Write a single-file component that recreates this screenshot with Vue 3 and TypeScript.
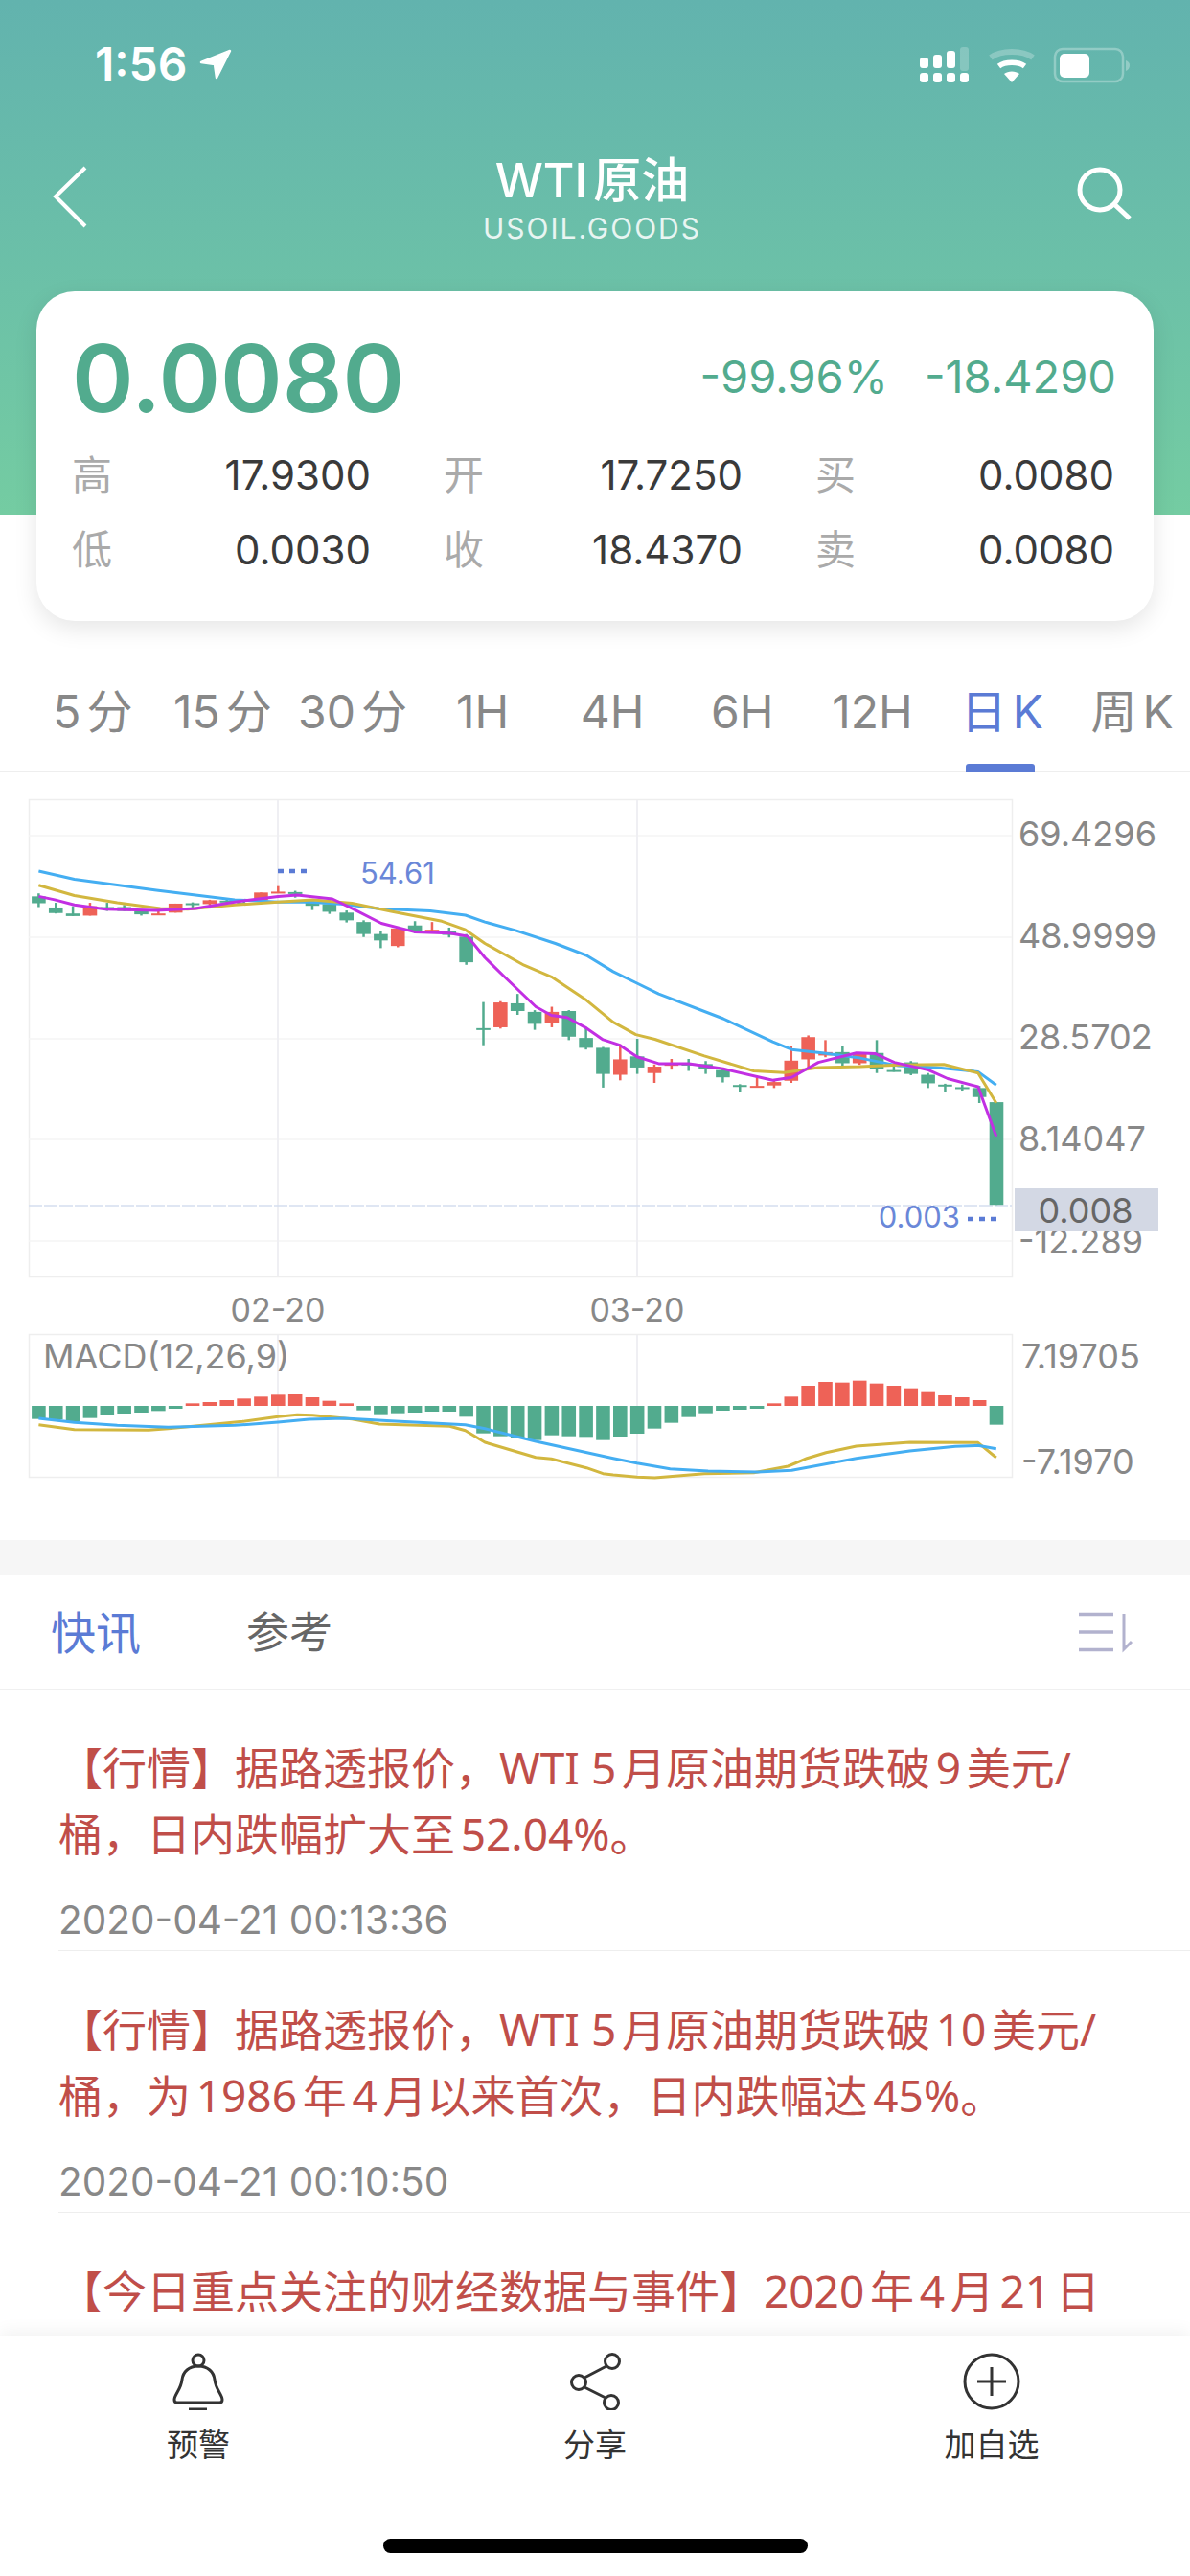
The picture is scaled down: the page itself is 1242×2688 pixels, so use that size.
<script setup lang="ts">
type Candle = [number, number, number, number, 0 | 1] // body top, body bottom, wick top, wick bottom, red?

const periods = ['5分', '15分', '30分', '1H', '4H', '6H', '12H', '日K', '周K']
const stats = [
  [['高', '17.9300'], ['低', '0.0030']],
  [['开', '17.7250'], ['收', '18.4370']],
  [['买', '0.0080'], ['卖', '0.0080']],
]
const news = [
  { lines: ['【行情】据路透报价，WTI 5月原油期货跌破9美元/', '桶，日内跌幅扩大至52.04%。'], time: '2020-04-21 00:13:36' },
  { lines: ['【行情】据路透报价，WTI 5月原油期货跌破10美元/', '桶，为1986年4月以来首次，日内跌幅达45%。'], time: '2020-04-21 00:10:50' },
  { lines: ['【今日重点关注的财经数据与事件】2020年4月21日'], time: '' },
]

// chart values below are in sampled px, converted to page coords by these
const kx = (i: number) => 40.4 + i * 17.85
const ky = (v: number) => 680 + v / 2.24
const my = (v: number) => 1370 + v / 3
const barW = 14.6

const candleData: Candle[] = [
  [572, 588, 565, 597, 0], [598, 611, 587, 612, 0], [612, 618, 595, 618, 0], [595, 617, 587, 617, 1],
  [597, 600, 587, 606, 0], [597, 606, 592, 606, 0], [607, 614, 605, 617, 0], [612, 614, 605, 615, 1],
  [589, 610, 589, 610, 1], [588, 590, 586, 600, 0], [581, 590, 580, 592, 1], [582, 584, 578, 590, 0],
  [587, 589, 580, 592, 0], [563, 581, 563, 581, 1], [561, 563, 548, 564, 1], [562, 565, 559, 575, 0],
  [586, 594, 580, 604, 0], [590, 608, 588, 613, 0], [610, 628, 605, 633, 0], [632, 660, 628, 667, 0],
  [660, 675, 652, 693, 0], [647, 688, 645, 691, 1], [640, 652, 630, 658, 0], [650, 654, 632, 655, 1],
  [652, 662, 645, 668, 0], [666, 726, 660, 732, 0], [880, 882, 819, 920, 0], [820, 878, 817, 881, 1],
  [822, 840, 800, 849, 0], [842, 870, 838, 884, 0], [842, 868, 830, 878, 1], [840, 900, 838, 908, 0],
  [903, 926, 878, 930, 0], [926, 987, 924, 1019, 0], [953, 989, 918, 1002, 1], [946, 972, 905, 987, 0],
  [970, 985, 965, 1008, 1], [962, 968, 952, 977, 1], [963, 965, 952, 980, 0], [964, 975, 957, 987, 0],
  [978, 995, 975, 1007, 0], [1013, 1015, 1011, 1029, 0], [1015, 1017, 995, 1017, 1], [1006, 1014, 1003, 1020, 1],
  [956, 1003, 922, 1008, 1], [901, 953, 897, 972, 1], [936, 944, 908, 948, 1], [936, 962, 922, 970, 0],
  [940, 962, 936, 966, 1], [938, 975, 908, 985, 0], [978, 981, 968, 982, 0], [960, 987, 957, 990, 0],
  [989, 1009, 985, 1020, 0], [1012, 1016, 1010, 1030, 0], [1018, 1022, 1012, 1026, 0], [1020, 1041, 1015, 1055, 0],
  [1053, 1293, 1053, 1293, 0],
]
const candles = candleData.map((c, i) => ({
  x: kx(i),
  top: ky(c[0]),
  h: Math.max((c[1] - c[0]) / 2.24, 2),
  wickTop: ky(c[2]),
  wickBottom: ky(c[3]),
  color: c[4] ? '#ee6257' : '#52ab8e',
}))

// macd histogram, 291 is the zero line
const macdData = [
  332, 333, 340, 329, 321, 315, 312, 307, 300, 283, 279, 273, 268, 262, 256, 255, 264, 275, 283,
  305, 317, 314, 312, 309, 309, 325, 377, 386, 392, 398, 383, 386, 388, 398, 387, 378, 362, 344, 326,
  314, 306, 303, 300, 283, 262, 228, 216, 218, 212, 221, 228, 236, 248, 258, 264, 273, 350,
]
const macdBars = macdData.map((v, i) => ({
  x: kx(i) - barW / 2,
  y: my(Math.min(v, 291)),
  h: Math.abs(v - 291) / 3,
  color: v < 291 ? '#ee6257' : '#52ab8e',
}))

function line(left: number[][], right: number[][], toY: (v: number) => number) {
  const a = left.map(([x, y]) => `${(x / 2.45).toFixed(1)},${toY(y).toFixed(1)}`)
  const b = right.map(([x, y]) => `${(620 + x / 2.52).toFixed(1)},${toY(y).toFixed(1)}`)
  return [...a, ...b].join(' ')
}

const maLines = [
  {
    color: '#44aef2',
    points: line(
      [[99, 513], [190, 532], [400, 558], [600, 580], [711, 585], [790, 585], [880, 590], [970, 601], [1100, 606], [1190, 616], [1240, 632], [1320, 652], [1420, 682], [1500, 710], [1568, 748]],
      [[113, 775], [170, 800], [340, 858], [470, 912], [520, 930], [600, 938], [700, 950], [800, 968], [900, 972], [1010, 982], [1058, 1013]],
      ky,
    ),
  },
  {
    color: '#d2b73f',
    points: line(
      [[99, 546], [190, 570], [300, 587], [410, 600], [480, 602], [600, 592], [711, 585], [800, 580], [900, 588], [1000, 607], [1130, 630], [1190, 650], [1240, 682], [1340, 733], [1410, 760], [1500, 815], [1568, 866]],
      [[110, 895], [160, 906], [290, 945], [420, 980], [500, 984], [590, 972], [700, 970], [800, 966], [920, 965], [1010, 985], [1058, 1055]],
      ky,
    ),
  },
  {
    color: '#c22fe3',
    points: line(
      [[99, 572], [140, 580], [190, 592], [270, 602], [400, 605], [500, 600], [600, 585], [711, 572], [760, 569], [850, 578], [900, 600], [975, 635], [1060, 655], [1150, 658], [1195, 665], [1240, 715], [1290, 760], [1370, 830], [1410, 850], [1450, 855], [1500, 880], [1542, 907]],
      [[68, 920], [113, 947], [170, 963], [250, 963], [340, 975], [470, 1002], [520, 995], [590, 960], [690, 938], [740, 940], [790, 960], [880, 978], [930, 998], [1010, 1017], [1058, 1133]],
      ky,
    ),
  },
]
const macdLines = [
  {
    color: '#d2b73f',
    points: line(
      [[99, 350], [190, 365], [380, 367], [430, 362], [620, 340], [711, 325], [760, 319], [800, 320], [900, 332], [970, 348], [1150, 355], [1190, 368], [1240, 405], [1370, 452], [1410, 457], [1500, 485], [1542, 503], [1568, 507]],
      [[113, 514], [160, 516], [290, 503], [420, 500], [510, 480], [560, 455], [610, 437], [690, 417], [830, 405], [1010, 406], [1058, 453]],
      my,
    ),
  },
  {
    color: '#44aef2',
    points: line(
      [[99, 330], [190, 343], [300, 352], [430, 358], [600, 352], [711, 342], [790, 333], [880, 330], [1000, 338], [1190, 350], [1240, 362], [1370, 402], [1568, 455]],
      [[113, 470], [200, 488], [300, 495], [430, 498], [520, 493], [690, 455], [830, 432], [950, 418], [1010, 415], [1058, 425]],
      my,
    ),
  },
]

const gridY = [872, 978, 1084, 1189, 1295]
const axisLabels = [
  { y: 870, text: '69.4296' },
  { y: 976, text: '48.9999' },
  { y: 1082, text: '28.5702' },
  { y: 1188, text: '8.14047' },
  { y: 1295, text: '-12.289' },
]
</script>

<template>
  <div class="page">
    <div class="top">
      <div class="status">
        <div class="clock">
          <span>1:56</span>
          <svg width="34" height="32" viewBox="0 0 34 32">
            <path d="M32 2 L2 14 L16 16 L18 30 Z" fill="#fff" stroke="#fff" stroke-width="2.500" stroke-linejoin="round" />
          </svg>
        </div>
        <svg class="status-icons" width="221" height="40" viewBox="0 0 221 40">
          <g fill="#fff">
            <rect x="1" y="12" width="9" height="11" rx="3" />
            <rect x="15" y="9" width="9" height="14" rx="3" />
            <rect x="29" y="5" width="9" height="18" rx="3" />
            <rect x="43" y="1" width="9" height="25" rx="3" opacity=".22" />
            <rect x="1" y="28" width="9" height="10" rx="3" />
            <rect x="15" y="28" width="9" height="10" rx="3" />
            <rect x="29" y="28" width="9" height="10" rx="3" />
            <rect x="43" y="28" width="9" height="10" rx="3" />
          </g>
          <g fill="none" stroke="#fff">
            <path d="M75 12 C86 4 108 4 119 12" stroke-width="6" opacity=".25" />
            <path d="M83.500 21 C90 16 104 16 110.500 21" stroke-width="5.500" />
          </g>
          <path d="M89 29 C93 25.500 101 25.500 105 29 L97 38 Z" fill="#fff" />
          <rect x="142" y="3" width="71" height="34" rx="8" fill="none" stroke="#fff" stroke-width="2.500" opacity=".3" />
          <rect x="147" y="8" width="31" height="25" rx="5" fill="#fff" />
          <path d="M216 15 C219 16 220 18 220 20 C220 22 219 25 216 26 Z" fill="#fff" opacity=".3" />
        </svg>
      </div>

      <div class="nav">
        <svg class="back" width="40" height="70" viewBox="0 0 40 70">
          <path d="M35 5 L4 35 L35 66" fill="none" stroke="#fff" stroke-width="4" />
        </svg>
        <div class="nav-title">
          <div class="title">WTI原油</div>
          <div class="subtitle">USOIL.GOODS</div>
        </div>
        <svg class="search" width="60" height="60" viewBox="0 0 60 60">
          <circle cx="26" cy="26" r="21" fill="none" stroke="#fff" stroke-width="5" />
          <path d="M42 42 L57 56" fill="none" stroke="#fff" stroke-width="5" />
        </svg>
      </div>

      <div class="card">
        <div class="quote">
          <div class="price">0.0080</div>
          <div class="change">
            <span>-99.96%</span>
            <span>-18.4290</span>
          </div>
        </div>
        <div class="stats">
          <div v-for="(col, i) in stats" :key="i" class="stat-col">
            <div v-for="row in col" :key="row[0]" class="stat">
              <span class="stat-label">{{ row[0] }}</span>
              <span class="stat-value">{{ row[1] }}</span>
            </div>
          </div>
        </div>
      </div>
    </div>

    <div class="periods">
      <div v-for="p in periods" :key="p" class="period" :class="{ active: p === '日K' }">{{ p }}</div>
    </div>

    <svg class="chart" width="1242" height="801" viewBox="0 806 1242 801">
      <rect x="30.500" y="834.500" width="1026" height="498" fill="none" stroke="#eeeeee" stroke-width="1.500" />
      <path v-for="y in gridY" :key="y" :d="`M30 ${y}H1056`" stroke="#f4f4f4" stroke-width="1.500" />
      <path d="M290 835V1332M665 835V1332" stroke="#efeff3" stroke-width="2" />
      <path d="M30 1258H1056" stroke="#d5deef" stroke-width="1.500" stroke-dasharray="14 2" />

      <g v-for="c in candles" :key="c.x">
        <path :d="`M${c.x} ${c.wickTop}V${c.wickBottom}`" :stroke="c.color" stroke-width="2.500" />
        <rect :x="c.x - barW / 2" :y="c.top" :width="barW" :height="c.h" :fill="c.color" />
      </g>
      <polyline
        v-for="l in maLines"
        :key="l.color"
        :points="l.points"
        fill="none"
        :stroke="l.color"
        stroke-width="3"
        stroke-linejoin="round"
      />

      <path d="M290 909H320" stroke="#5b7bd5" stroke-width="4.500" stroke-dasharray="6 6" />
      <text x="376" y="922" class="mark">54.61</text>
      <path d="M1010 1272H1040" stroke="#5b7bd5" stroke-width="4.500" stroke-dasharray="6 6" />
      <text x="1002" y="1281" class="mark" text-anchor="end">0.003</text>

      <text v-for="a in axisLabels" :key="a.text" x="1063" :y="a.y + 13" class="axis">{{ a.text }}</text>
      <rect x="1059" y="1240" width="150" height="45" fill="#d3d8e4" />
      <text x="1133" y="1276" class="axis dark" text-anchor="middle">0.008</text>

      <text x="290" y="1379" class="axis date" text-anchor="middle">02-20</text>
      <text x="665" y="1379" class="axis date" text-anchor="middle">03-20</text>

      <rect x="30.500" y="1392.500" width="1026" height="149" fill="none" stroke="#eeeeee" stroke-width="1.500" />
      <path d="M290 1393V1541M665 1393V1541" stroke="#efeff3" stroke-width="2" />
      <rect v-for="b in macdBars" :key="b.x" :x="b.x" :y="b.y" :width="barW" :height="b.h" :fill="b.color" />
      <polyline
        v-for="l in macdLines"
        :key="l.color"
        :points="l.points"
        fill="none"
        :stroke="l.color"
        stroke-width="3"
        stroke-linejoin="round"
      />
      <text x="45" y="1428" class="axis">MACD(12,26,9)</text>
      <text x="1066" y="1428" class="axis">7.19705</text>
      <text x="1066" y="1538" class="axis">-7.1970</text>
    </svg>

    <div class="band"></div>

    <div class="news-tabs">
      <span class="news-tab active">快讯</span>
      <span class="news-tab">参考</span>
      <svg class="sort" width="60" height="44" viewBox="0 0 60 44">
        <path d="M0 3.500H36M0 22H36M0 40.500H36" stroke="#b2b2ce" stroke-width="3.500" />
        <path d="M47 3V40L55 32" fill="none" stroke="#b2b2ce" stroke-width="3" />
      </svg>
    </div>

    <div class="news">
      <div v-for="n in news" :key="n.lines[0]" class="news-item">
        <div class="news-text">
          <div v-for="l in n.lines" :key="l">{{ l }}</div>
        </div>
        <div v-if="n.time" class="news-time">{{ n.time }}</div>
      </div>
    </div>

    <div class="bottom">
      <div class="actions">
        <div class="action">
          <svg width="60" height="60" viewBox="0 0 60 60" fill="none" stroke="#333" stroke-width="3">
            <circle cx="30" cy="8" r="6" />
            <path d="M30 14 C20 14 14 20 13 28 C12 38 5 44 5 49 C5 51 6 52 8 52 H52 C54 52 55 51 55 49 C55 44 48 38 47 28 C46 20 40 14 30 14 Z" />
            <path d="M20 59 H39" />
          </svg>
          <span>预警</span>
        </div>
        <div class="action">
          <svg width="60" height="60" viewBox="0 0 60 60" fill="none" stroke="#333" stroke-width="3">
            <circle cx="48" cy="9" r="7.500" />
            <circle cx="13" cy="31" r="7.500" />
            <circle cx="47" cy="52" r="7.500" />
            <path d="M42 14 L19 26 M19 36 L41 47" />
          </svg>
          <span>分享</span>
        </div>
        <div class="action">
          <svg width="60" height="60" viewBox="0 0 60 60" fill="none" stroke="#333" stroke-width="3">
            <circle cx="30" cy="30" r="28" />
            <path d="M15 30 H45 M30 15 V45" />
          </svg>
          <span>加自选</span>
        </div>
      </div>
      <div class="home-bar"></div>
    </div>
  </div>
</template>

<style>
html,
body {
  margin: 0;
  background: #fff;
}
</style>

<style scoped>
.page {
  width: 1242px;
  height: 2688px;
  display: flex;
  flex-direction: column;
  overflow: hidden;
  background: #fff;
  font-family: Inter, "Noto Sans CJK SC", sans-serif;
  text-autospace: normal;
}

.top {
  background: linear-gradient(#62b3ae, #74cca2 537px, #fff 537px);
}

.status {
  height: 134px;
  box-sizing: border-box;
  padding: 46px 62px 0 99px;
  display: flex;
  justify-content: space-between;
  align-items: flex-start;
}

.clock {
  display: flex;
  align-items: center;
  gap: 12px;
  color: #fff;
  font-size: 48px;
  font-weight: 600;
  line-height: 42px;
}

.status-icons {
  margin-top: 2px;
}

.nav {
  display: grid;
  grid-template-columns: 1fr auto 1fr;
  padding: 26px 60px 46px 54px;
  color: #fff;
  text-align: center;
}

.back {
  margin-top: 10px;
}

.search {
  justify-self: end;
  margin-top: 12px;
}

.title {
  font-size: 50px;
  font-weight: 500;
  line-height: 56px;
}

.subtitle {
  margin-top: 2px;
  font-size: 30px;
  line-height: 40px;
  letter-spacing: 2px;
  opacity: 0.85;
}

.card {
  margin: 0 38px;
  height: 344px;
  box-sizing: border-box;
  padding: 41px 39px 0 37px;
  background: #fff;
  border-radius: 40px;
  box-shadow: 0 8px 24px rgba(0, 0, 0, 0.1);
}

.quote {
  display: flex;
  justify-content: space-between;
  align-items: center;
  height: 100px;
  color: #52ab8e;
}

.price {
  font-size: 98px;
  font-weight: 600;
  line-height: 100px;
}

.change {
  display: flex;
  gap: 38px;
  font-size: 47px;
  margin-top: -6px;
}

.stats {
  display: grid;
  grid-template-columns: repeat(3, 312px);
  column-gap: 76px;
  margin-top: 12px;
}

.stat {
  display: flex;
  justify-content: space-between;
  height: 78px;
  line-height: 78px;
  font-size: 42px;
}

.stat-label {
  color: #aaa;
}

.stat-value {
  color: #3a3a3a;
}

.periods {
  display: flex;
  height: 158px;
  box-sizing: border-box;
  padding-left: 29px;
  align-items: flex-start;
  border-bottom: 1.5px solid #eeeeee;
}

.period {
  position: relative;
  flex: 0 0 135.6px;
  margin-top: 53px;
  height: 105px;
  line-height: 84px;
  text-align: center;
  font-size: 48px;
  color: #888;
  white-space: nowrap;
}

.period.active {
  color: #5b7bd5;
}

.period.active::after {
  content: "";
  position: absolute;
  left: 30px;
  bottom: 0;
  width: 72px;
  height: 9px;
  border-radius: 3px 3px 0 0;
  background: #5b7bd5;
}

.chart {
  display: block;
  flex: none;
}

.chart text {
  font-family: Inter, sans-serif;
}

.axis {
  font-size: 36px;
  fill: #888;
}

.axis.date {
  font-size: 34px;
}

.axis.dark {
  fill: #666;
}

.mark {
  font-size: 31px;
  fill: #6a87d8;
}

.band {
  flex: none;
  height: 36px;
  background: #f6f6f6;
}

.news-tabs {
  flex: none;
  height: 120px;
  box-sizing: border-box;
  display: flex;
  align-items: center;
  padding: 0 56px 4px 53px;
  border-bottom: 1.5px solid #f0f0f0;
  color: #666;
}

.news-tab {
  font-size: 45px;
}

.news-tab.active {
  font-size: 47px;
  color: #5b7bd5;
  margin-right: 110px;
}

.sort {
  margin-left: auto;
  margin-top: 4px;
}

.news {
  flex: 1;
  min-height: 0;
  overflow: hidden;
  padding-left: 61px;
}

.news-item {
  padding-top: 47px;
  height: 273px;
  box-sizing: border-box;
  border-bottom: 1.5px solid #eeeeee;
}

.news-text {
  font-family: "Noto Sans", "Noto Sans CJK SC", sans-serif;
  font-size: 46px;
  line-height: 69px;
  color: #c04e49;
  white-space: nowrap;
}

.news-time {
  margin-top: 30px;
  font-size: 40.500px;
  line-height: 52px;
  color: #888;
}

.bottom {
  flex: none;
  height: 250px;
  box-sizing: border-box;
  padding-top: 17px;
  background: #fff;
  box-shadow: 0 -6px 16px rgba(0, 0, 0, 0.05);
  position: relative;
}

.actions {
  display: grid;
  grid-template-columns: repeat(3, 414px);
}

.action {
  display: flex;
  flex-direction: column;
  align-items: center;
  gap: 16px;
  font-size: 33px;
  line-height: 40px;
  color: #333;
}

.home-bar {
  width: 443px;
  height: 15px;
  margin: 78px auto 0;
  border-radius: 8px;
  background: #000;
}
</style>
